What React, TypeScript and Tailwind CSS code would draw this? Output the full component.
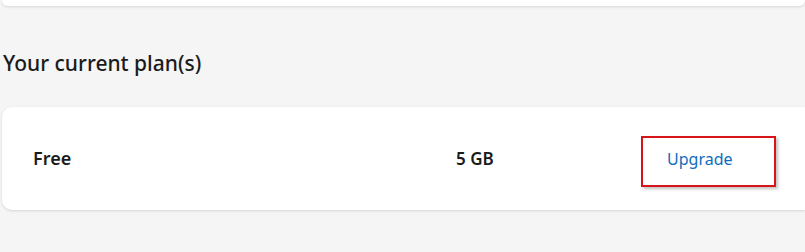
export default function App() {
  return (
    <div
      className="h-[252px] w-[805px] overflow-hidden bg-[#f5f5f5] text-[#1b1b1b]"
      style={{ fontFamily: '"Segoe UI", "Noto Sans", sans-serif' }}
    >
      {/* previous section, cut off at the top */}
      <div className="ml-[2px] h-[6px] rounded-b-lg bg-white shadow-[0_1px_3px_rgba(0,0,0,0.12)]" />

      <h2 className="mt-[43px] pl-[3px] text-[21px] font-medium leading-[28px]">
        Your current plan(s)
      </h2>

      <div className="ml-[2px] mt-[30px] flex h-[103px] items-center rounded-l-[10px] bg-white pl-[31px] shadow-[0_1px_3px_rgba(0,0,0,0.13)]">
        <div className="w-[423px] text-[18px] font-semibold">Free</div>
        <div className="w-[185px] text-[17px] font-semibold">5 GB</div>
        <div className="mt-[6px] flex h-[51px] w-[135px] items-center border-2 border-[#d7141a] pb-[6px] pl-[24px] shadow-[2px_2px_3px_rgba(0,0,0,0.25)]">
          <a href="#" className="text-[16px] text-[#0f6cbd]">
            Upgrade
          </a>
        </div>
      </div>
    </div>
  );
}
